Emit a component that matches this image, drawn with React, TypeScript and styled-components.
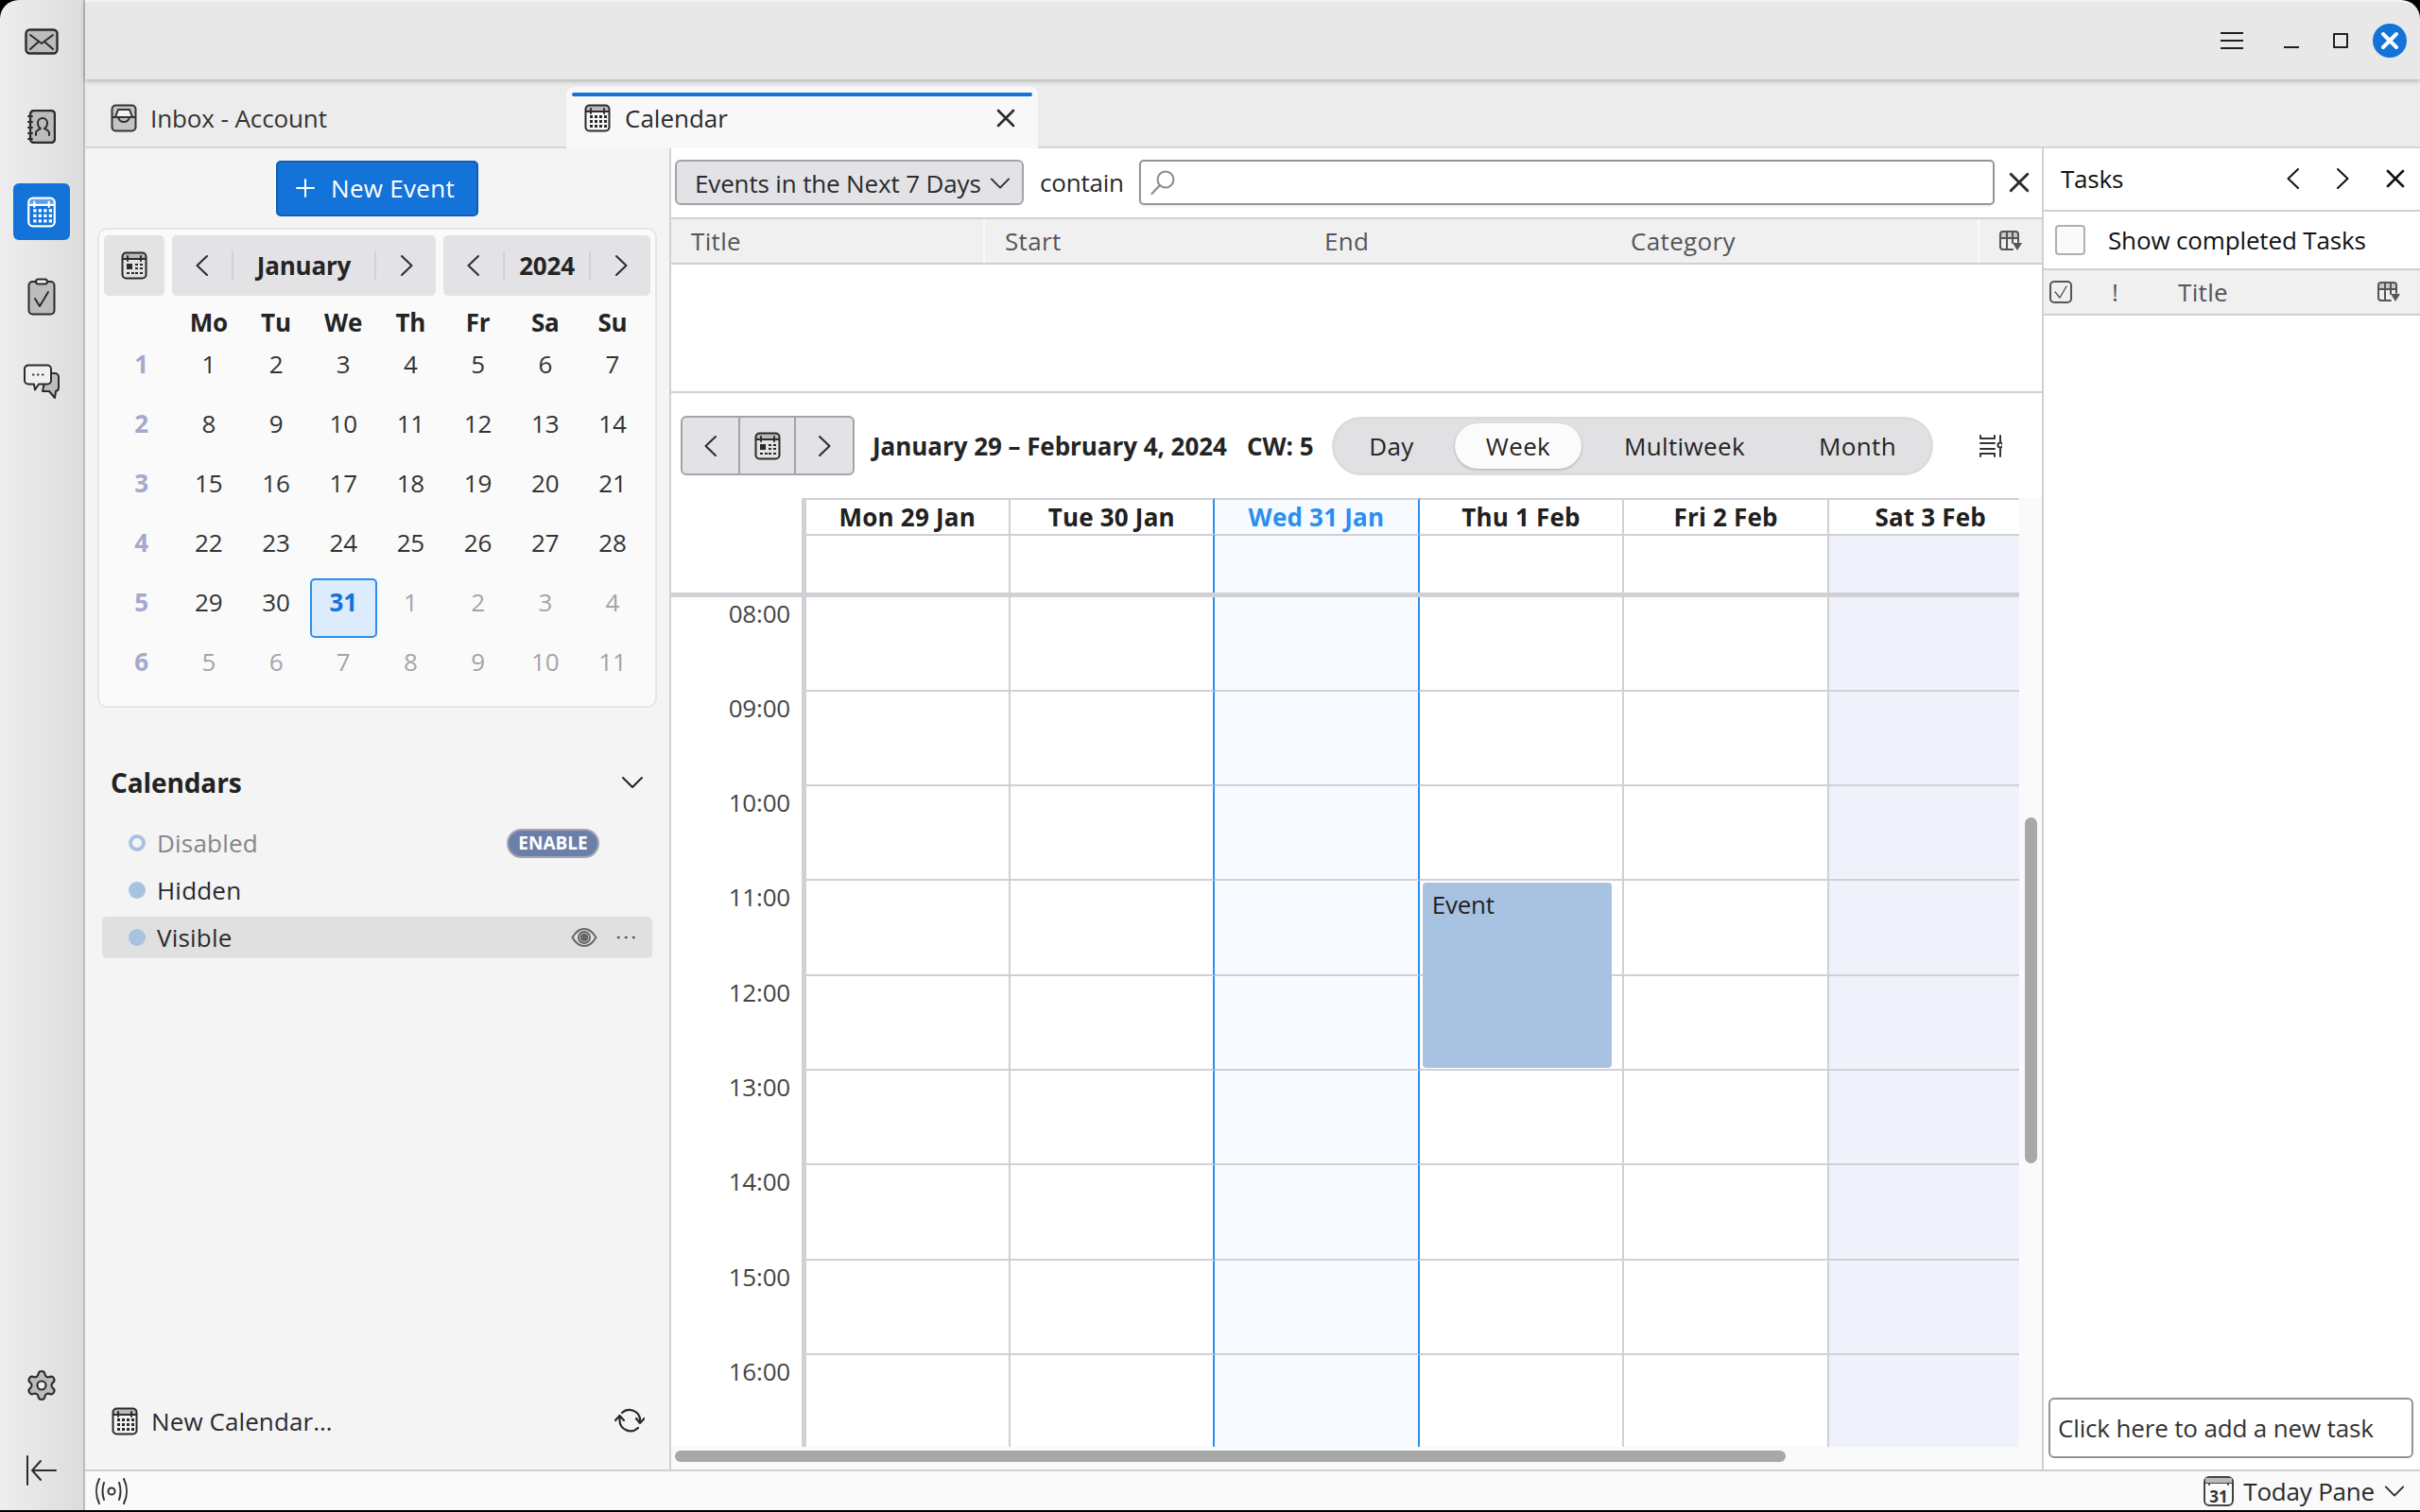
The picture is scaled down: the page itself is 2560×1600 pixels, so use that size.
import React from "react";
import styled, { createGlobalStyle } from "styled-components";

const GlobalStyles = createGlobalStyle`
  html, body {
    margin: 0;
    padding: 0;
    background: #000;
  }
  * {
    box-sizing: border-box;
  }
  body {
    font-family: "Open Sans", "Noto Sans", sans-serif;
    font-size: 26px;
    color: #2a2a2e;
    letter-spacing: -0.2px;
  }
`;

const Shell = styled.div`
  width: 2560px;
  height: 1600px;
  padding-bottom: 2px;
  background: #000;
  display: grid;
  grid-template-columns: 90px 1fr;
  overflow: hidden;
`;

const Rail = styled.nav`
  display: flex;
  flex-direction: column;
  align-items: center;
  gap: 30px;
  padding: 14px 0 12px;
  background: linear-gradient(to right, #eeeeee, #dcdcdc);
  border-right: 2px solid #bdbdbd;
  border-top-left-radius: 20px;
`;

const RailButton = styled.div<{ $active?: boolean }>`
  width: 60px;
  height: 60px;
  display: flex;
  align-items: center;
  justify-content: center;
  border-radius: 6px;
  color: #2b2b2b;
  background: ${(p) => (p.$active ? "#1373d9" : "transparent")};
`;

const RailSpacer = styled.div`
  flex: 1;
`;

const Content = styled.div`
  display: flex;
  flex-direction: column;
  min-width: 0;
  min-height: 0;
`;

const TitleBar = styled.header`
  height: 84px;
  flex: none;
  display: flex;
  align-items: center;
  justify-content: flex-end;
  padding-right: 6px;
  background: #e8e8e8;
  border-top: 2px solid #f2f2f2;
  border-top-right-radius: 20px;
  box-shadow: 0 2px 5px rgba(0, 0, 0, 0.25);
  position: relative;
  z-index: 3;
`;

const WinButton = styled.div<{ $gap?: number }>`
  width: 52px;
  height: 52px;
  display: flex;
  align-items: center;
  justify-content: center;
  margin-right: ${(p) => p.$gap ?? 0}px;
  color: #1f1f1f;
`;

const TabBar = styled.div`
  height: 73px;
  flex: none;
  display: flex;
  align-items: flex-end;
  background: #ececec;
  border-bottom: 2px solid #d6d6d8;
`;

const InboxTab = styled.div`
  width: 509px;
  height: 71px;
  display: flex;
  align-items: center;
  gap: 14px;
  padding: 11px 0 0 27px;
  letter-spacing: -0.1px;
  color: #333;
`;

const ActiveTab = styled.div`
  position: relative;
  width: 499px;
  height: 65px;
  margin-bottom: -2px;
  display: flex;
  align-items: center;
  gap: 15px;
  padding: 1px 20px 0 19px;
  letter-spacing: 0;
  background: #f8f8f8;
  border-radius: 8px 8px 0 0;
`;

const TabLine = styled.div`
  position: absolute;
  top: 6px;
  left: 6px;
  right: 6px;
  height: 4px;
  background: #1373d9;
  border-radius: 2px;
`;

const TabClose = styled.div`
  margin-left: auto;
  margin-right: 4px;
  display: flex;
`;

const Body = styled.div`
  flex: 1;
  min-height: 0;
  display: flex;
`;

const LeftPane = styled.aside`
  width: 620px;
  flex: none;
  display: flex;
  flex-direction: column;
  padding-top: 13px;
  background: #f4f4f4;
  border-right: 2px solid #d0d0d5;
`;

const NewEventButton = styled.button`
  align-self: center;
  width: 214px;
  height: 59px;
  display: flex;
  align-items: center;
  gap: 17px;
  padding: 0 0 2px 19px;
  font: inherit;
  letter-spacing: 0.3px;
  color: #fff;
  background: #1373d9;
  border: 2px solid #0e5cb5;
  border-radius: 5px;
`;

const MiniMonth = styled.section`
  width: 592px;
  height: 508px;
  margin: 12px 0 0 13px;
  padding: 6px 5px;
  background: #fafafa;
  border: 2px solid #e6e6e6;
  border-radius: 10px;
`;

const MiniHead = styled.div`
  display: flex;
  gap: 8px;
`;

const MiniToday = styled.div`
  width: 64px;
  height: 64px;
  display: flex;
  align-items: center;
  justify-content: center;
  background: #e3e3e6;
  border-radius: 5px;
`;

const Stepper = styled.div<{ $width: number; $side: number }>`
  width: ${(p) => p.$width}px;
  height: 64px;
  display: grid;
  grid-template-columns: ${(p) => p.$side}px 1fr ${(p) => p.$side}px;
  align-items: center;
  justify-items: center;
  background: #e3e3e6;
  border-radius: 5px;
`;

const StepperLabel = styled.div`
  justify-self: stretch;
  height: 30px;
  display: flex;
  align-items: center;
  justify-content: center;
  font-weight: 700;
  color: #242424;
  border-left: 2px solid #d2d2d6;
  border-right: 2px solid #d2d2d6;
`;

const DayGrid = styled.div`
  display: grid;
  grid-template-columns: repeat(8, 71.2px);
  grid-template-rows: 47px repeat(6, 63px);
  margin-left: 4px;
`;

const WeekDayName = styled.div`
  padding-top: 10px;
  text-align: center;
  line-height: 36px;
  font-weight: 700;
  color: #242424;
`;

const WeekNumber = styled.div`
  line-height: 50px;
  text-align: center;
  font-weight: 700;
  color: #a5a8cc;
`;

const DayCell = styled.div<{ $muted?: boolean; $selected?: boolean }>`
  line-height: ${(p) => (p.$selected ? "47px" : "50px")};
  text-align: center;
  font-weight: ${(p) => (p.$selected ? 700 : 400)};
  color: ${(p) => (p.$selected ? "#1373d9" : p.$muted ? "#a4a4a8" : "#333")};
  ${(p) =>
    p.$selected
      ? `background:#dcecfd;border:2px solid #2a8fef;border-radius:5px;`
      : ""}
`;

const SectionHead = styled.div`
  height: 44px;
  margin-top: 57px;
  display: flex;
  align-items: center;
  justify-content: space-between;
  padding: 0 27px 0 27px;
  font-size: 28px;
  font-weight: 700;
  letter-spacing: -0.1px;
  color: #222;
`;

const CalendarList = styled.div`
  display: flex;
  flex-direction: column;
  gap: 6px;
  width: 582px;
  margin: 20px 0 0 18px;
`;

const CalendarRow = styled.div<{ $hover?: boolean; $dim?: boolean }>`
  height: 44px;
  display: flex;
  align-items: center;
  padding: 0 18px 0 28px;
  border-radius: 5px;
  letter-spacing: 0.2px;
  background: ${(p) => (p.$hover ? "#e0e0e0" : "transparent")};
  color: ${(p) => (p.$dim ? "#85858a" : "#2a2a2e")};
`;

const CalendarDot = styled.span<{ $hollow?: boolean }>`
  width: 18px;
  height: 18px;
  flex: none;
  margin-right: 12px;
  border-radius: 50%;
  background: ${(p) => (p.$hollow ? "transparent" : "#a8c2e1")};
  border: ${(p) => (p.$hollow ? "4px solid #a8c2e1" : "none")};
`;

const EnablePill = styled.span`
  width: 98px;
  height: 31px;
  margin-left: auto;
  margin-right: 38px;
  display: flex;
  align-items: center;
  justify-content: center;
  font-size: 19px;
  font-weight: 700;
  letter-spacing: 0;
  color: #fff;
  background: #6b80a8;
  border: 2px solid #a2a5b2;
  border-radius: 16px;
`;

const RowActions = styled.div`
  margin-left: auto;
  display: flex;
  align-items: center;
  gap: 20px;
`;

const PaneFooter = styled.div`
  margin-top: auto;
  height: 50px;
  margin-bottom: 26px;
  display: flex;
  align-items: center;
  padding: 0 26px 0 28px;
  gap: 14px;
  letter-spacing: 0.1px;
`;

const SyncButton = styled.div`
  margin-left: auto;
  display: flex;
`;

const Main = styled.main`
  flex: 1;
  min-width: 0;
  display: flex;
  flex-direction: column;
  background: #fff;
`;

const FilterBar = styled.div`
  height: 75px;
  flex: none;
  display: flex;
  align-items: center;
  padding: 0 13px 2px 4px;
  border-bottom: 2px solid #d0d0d5;
`;

const FilterSelect = styled.div`
  width: 369px;
  height: 48px;
  flex: none;
  display: flex;
  align-items: center;
  justify-content: space-between;
  padding: 2px 12px 0 19px;
  letter-spacing: -0.15px;
  color: #2a2a2e;
  background: #e3e3e6;
  border: 2px solid #a3a3aa;
  border-radius: 6px;
`;

const FilterWord = styled.div`
  width: 88px;
  flex: none;
  margin: 0 17px 0 17px;
  text-align: center;
`;

const SearchBox = styled.div`
  flex: 1;
  height: 48px;
  display: flex;
  align-items: center;
  padding-left: 10px;
  background: #fff;
  border: 2px solid #949494;
  border-radius: 5px;
  box-shadow: 0 2px 3px rgba(0, 0, 0, 0.06);
`;

const FilterClose = styled.div`
  margin-left: 15px;
  display: flex;
`;

const TreeHead = styled.div`
  height: 48px;
  flex: none;
  display: grid;
  grid-template-columns: 332px 338px 324px 390px 66px;
  background: #f0f0f0;
  border-bottom: 2px solid #d0d0d5;
`;

const TreeCol = styled.div<{ $sep?: boolean; $icon?: boolean }>`
  display: flex;
  align-items: center;
  justify-content: ${(p) => (p.$icon ? "center" : "flex-start")};
  padding-left: ${(p) => (p.$icon ? "0" : "21px")};
  letter-spacing: 0.35px;
  color: #55555a;
  border-right: ${(p) => (p.$sep ? "2px solid #fafafa" : "none")};
`;

const EventList = styled.div`
  height: 136px;
  flex: none;
  border-bottom: 2px solid #d0d0d5;
`;

const ViewBar = styled.div`
  height: 111px;
  flex: none;
  display: flex;
  align-items: center;
  padding-left: 10px;
`;

const NavGroup = styled.div`
  width: 184px;
  height: 63px;
  flex: none;
  display: grid;
  grid-template-columns: 59px 61px 1fr;
  background: #e3e3e6;
  border: 2px solid #a3a3aa;
  border-radius: 6px;
`;

const NavCell = styled.div<{ $mid?: boolean }>`
  display: flex;
  align-items: center;
  justify-content: center;
  border-left: ${(p) => (p.$mid ? "2px solid #a3a3aa" : "none")};
  border-right: ${(p) => (p.$mid ? "2px solid #a3a3aa" : "none")};
`;

const RangeLabel = styled.div<{ $width: number; $left?: number }>`
  width: ${(p) => p.$width}px;
  margin-left: ${(p) => p.$left ?? 0}px;
  flex: none;
  font-weight: 700;
  letter-spacing: -0.05px;
  white-space: nowrap;
  color: #242424;
`;

const ViewTabs = styled.div`
  width: 636px;
  height: 62px;
  flex: none;
  display: flex;
  align-items: center;
  gap: 7px;
  background: #e1e1e4;
  border: 3px solid #dcdcde;
  border-radius: 31px;
`;

const ViewTab = styled.div<{ $width: number; $active?: boolean }>`
  width: ${(p) => p.$width}px;
  height: 48px;
  display: flex;
  align-items: center;
  justify-content: center;
  font-weight: 500;
  letter-spacing: 0.35px;
  color: #242424;
  border-radius: 24px;
  background: ${(p) => (p.$active ? "#fbfbfb" : "transparent")};
  box-shadow: ${(p) => (p.$active ? "0 1px 3px rgba(0,0,0,.25)" : "none")};
`;

const ToolButton = styled.div`
  margin-left: 49px;
  display: flex;
`;

const WeekView = styled.div`
  position: relative;
  flex: 1;
  min-height: 0;
  background: #fafafa;
  overflow: hidden;
`;

const WeekTable = styled.div`
  width: 1426px;
  height: 1004px;
  background: #fff;
  overflow: hidden;
`;

const WeekRow = styled.div<{ $height: number }>`
  height: ${(p) => p.$height}px;
  display: grid;
  grid-template-columns: 138px 5px 215.5px repeat(5, 216.6px);
`;

const Gutter = styled.div`
  padding-right: 12px;
  text-align: right;
  line-height: 35px;
  color: #444;
`;

const GutterEdge = styled.div`
  background: #d0d0d5;
`;

const WeekCell = styled.div<{ $bg: string; $line: string; $top?: boolean; $open?: boolean }>`
  position: relative;
  background: ${(p) => p.$bg};
  border-right: 2px solid ${(p) => p.$line};
  border-bottom: ${(p) => (p.$open ? "none" : "2px solid #d0d0d5")};
  border-top: ${(p) => (p.$top ? "2px solid #d0d0d5" : "none")};
`;

const DayTitle = styled(WeekCell)<{ $today?: boolean }>`
  display: flex;
  align-items: center;
  justify-content: center;
  padding-bottom: 2px;
  font-weight: 700;
  letter-spacing: 0.2px;
  color: ${(p) => (p.$today ? "#2a8fef" : "#202020")};
`;

const AllDayDivider = styled.div`
  height: 5px;
  background: #d0d0d5;
`;

const EventCard = styled.div`
  position: absolute;
  top: 2px;
  left: 3px;
  width: 200px;
  height: 196px;
  z-index: 2;
  padding: 5px 10px;
  line-height: 36px;
  color: #222;
  background: #a8c3e1;
  border-radius: 4px;
`;

const VScroll = styled.div`
  position: absolute;
  left: 1432px;
  top: 338px;
  width: 13px;
  height: 366px;
  background: #a8a8a8;
  border-radius: 7px;
`;

const HScroll = styled.div`
  position: absolute;
  left: 4px;
  top: 1008px;
  width: 1175px;
  height: 12px;
  background: #a8a8a8;
  border-radius: 6px;
`;

const TasksPane = styled.aside`
  width: 400px;
  flex: none;
  display: flex;
  flex-direction: column;
  background: #fff;
  border-left: 2px solid #d0d0d5;
`;

const TasksHead = styled.div`
  height: 67px;
  flex: none;
  display: flex;
  align-items: center;
  padding: 0 16px 2px 18px;
  color: #111;
  border-bottom: 2px solid #d0d0d5;
`;

const TasksTitle = styled.div`
  flex: 1;
`;

const TasksNav = styled.div<{ $gap: number }>`
  display: flex;
  margin-left: ${(p) => p.$gap}px;
`;

const TasksOption = styled.div`
  height: 62px;
  flex: none;
  display: flex;
  align-items: center;
  gap: 24px;
  padding-left: 12px;
  letter-spacing: -0.15px;
  color: #111;
  border-bottom: 2px solid #d0d0d5;
`;

const CheckBox = styled.span`
  width: 32px;
  height: 32px;
  background: #fafafa;
  border: 2px solid #b0b0b4;
  border-radius: 4px;
`;

const TasksColumns = styled.div`
  height: 48px;
  flex: none;
  display: flex;
  align-items: center;
  padding-left: 6px;
  letter-spacing: 0.35px;
  color: #55555a;
  background: #f0f0f0;
  border-bottom: 2px solid #d0d0d5;
`;

const TaskColMark = styled.span`
  margin-left: 42px;
  width: 70px;
`;

const TaskColTitle = styled.span`
  flex: 1;
`;

const TaskColPicker = styled.span`
  display: flex;
  margin-right: 21px;
`;

const TasksSpacer = styled.div`
  flex: 1;
`;

const AddTask = styled.div`
  height: 64px;
  flex: none;
  margin: 0 7px 12px 5px;
  display: flex;
  align-items: center;
  padding-left: 8px;
  letter-spacing: -0.15px;
  color: #333;
  background: #fff;
  border: 2px solid #949494;
  border-radius: 6px;
`;

const StatusBar = styled.footer`
  height: 43px;
  flex: none;
  display: flex;
  align-items: center;
  padding: 0 16px 0 11px;
  background: #fafafa;
  border-top: 2px solid #d0d0d5;
`;

const TodayPane = styled.div`
  margin-left: auto;
  display: flex;
  align-items: center;
  gap: 10px;
`;

const Glyph = styled.svg`
  display: block;
  flex: none;
  fill: none;
  stroke: currentColor;
  stroke-width: 2;
  stroke-linecap: round;
  stroke-linejoin: round;
`;

const Chevron = ({ dir, size = 24 }: { dir: "left" | "right" | "down"; size?: number }) => {
  const d = dir === "left" ? "M17 2 6.5 12 17 22" : dir === "right" ? "M7 2l10.5 10L7 22" : "M2 7l10 10L22 7";
  return (
    <Glyph width={size} height={size} viewBox="0 0 24 24">
      <path d={d} />
    </Glyph>
  );
};

const CloseX = ({ size = 20 }: { size?: number }) => (
  <Glyph width={size} height={size} viewBox="0 0 20 20">
    <path d="M2 2l16 16M18 2 2 18" style={{ strokeWidth: 2.6 }} />
  </Glyph>
);

const CalendarIcon = ({ w = 28, h = 30, color = "#2b2b2b", head = "#b9b9b9", mini = false }: { w?: number; h?: number; color?: string; head?: string; mini?: boolean }) => (
  <Glyph width={w} height={h} viewBox="0 0 28 30" style={{ color }}>
    <path d="M5 2h18a3 3 0 0 1 3 3v4H2V5a3 3 0 0 1 3-3z" style={{ fill: head, stroke: "none" }} />
    <rect x="1.5" y="1.5" width="25" height="27" rx="4" />
    <path d="M2 8h24M7 5v5M21 5v5" />
    {mini ? (
      <g style={{ fill: color, stroke: "none" }}>
        <rect x="6" y="13" width="6" height="6" />
        <rect x="15" y="13" width="3" height="2" />
        <rect x="20" y="13" width="3" height="2" />
        <rect x="15" y="17" width="3" height="2" />
        <rect x="20" y="17" width="3" height="2" />
        <rect x="6" y="22" width="3" height="2" />
        <rect x="11" y="22" width="3" height="2" />
        <rect x="15" y="22" width="3" height="2" />
        <rect x="20" y="22" width="3" height="2" />
      </g>
    ) : (
      <g style={{ fill: color, stroke: "none" }}>
        {[12, 17, 22].map((y) =>
          [6, 11, 16, 21].map((x) => <rect key={`${x}-${y}`} x={x} y={y} width="3" height="3" />)
        )}
      </g>
    )}
  </Glyph>
);

const MailIcon = () => (
  <Glyph width={36} height={28} viewBox="0 0 36 28">
    <rect x="1.5" y="1.5" width="33" height="25" rx="4" style={{ fill: "#bcbcbc", strokeWidth: 2.4 }} />
    <path d="M6 7l12 9L30 7M6 22l9-8M30 22l-9-8" />
  </Glyph>
);

const BookIcon = () => (
  <Glyph width={30} height={36} viewBox="0 0 30 36">
    <rect x="3" y="1" width="26" height="34" rx="4" style={{ fill: "#bcbcbc", strokeWidth: 2.4 }} />
    <path d="M1 7h4M1 13h4M1 19h4M1 25h4M1 31h4" />
    <path d="M9 27v-2c0-3 3-4 5-5-2-1-3-4-3-6a5 5 0 0 1 10 0c0 2-1 5-3 6 2 1 5 2 5 5v2" />
  </Glyph>
);

const TasksIcon = () => (
  <Glyph width={30} height={40} viewBox="0 0 30 40">
    <rect x="1.5" y="4" width="27" height="34.5" rx="4" style={{ fill: "#bcbcbc" }} />
    <rect x="9" y="1.5" width="12" height="5" rx="2.5" style={{ fill: "#f0f0f0" }} />
    <path d="M8 22l5 8 9-15" />
  </Glyph>
);

const ChatIcon = () => (
  <Glyph width={38} height={38} viewBox="0 0 38 38">
    <path d="M24 10h9a4 4 0 0 1 4 4v11a4 4 0 0 1-3 4l-1 7-6-7h-7z" style={{ fill: "#bcbcbc" }} />
    <path d="M5 1.5h20a4 4 0 0 1 4 4v12a4 4 0 0 1-4 4H16l-4 6-1-6H5a4 4 0 0 1-4-4v-12a4 4 0 0 1 4-4z" style={{ fill: "#f0f0f0" }} />
    <path d="M10 11.5h.5M15 11.5h.5M20 11.5h.5" />
  </Glyph>
);

const GearIcon = () => (
  <Glyph width={36} height={38} viewBox="0 0 24 24" style={{ strokeWidth: 1.4 }}>
    <path
      d="M9.671 4.136a2.34 2.34 0 0 1 4.659 0 2.34 2.34 0 0 0 3.319 1.915 2.34 2.34 0 0 1 2.33 4.033 2.34 2.34 0 0 0 0 3.831 2.34 2.34 0 0 1-2.33 4.033 2.34 2.34 0 0 0-3.319 1.915 2.34 2.34 0 0 1-4.659 0 2.34 2.34 0 0 0-3.32-1.915 2.34 2.34 0 0 1-2.33-4.033 2.34 2.34 0 0 0 0-3.831A2.34 2.34 0 0 1 6.35 6.051a2.34 2.34 0 0 0 3.319-1.915"
      style={{ fill: "#bcbcbc" }}
    />
    <circle cx="12" cy="12" r="3" style={{ fill: "#f0f0f0" }} />
  </Glyph>
);

const CollapseIcon = () => (
  <Glyph width={34} height={32} viewBox="0 0 34 32">
    <path d="M2 1v30M32 16H7M16 6 7 16l9 10" />
  </Glyph>
);

const PlusIcon = () => (
  <Glyph width={20} height={20} viewBox="0 0 20 20">
    <path d="M10 1v18M1 10h18" />
  </Glyph>
);

const InboxIcon = () => (
  <Glyph width={28} height={30} viewBox="0 0 28 30">
    <rect x="1.5" y="1.5" width="25" height="27" rx="4" style={{ fill: "#c4c4c4" }} />
    <path d="M8 6h12l3 8H5z" style={{ fill: "#f2f2f2" }} />
    <path d="M2 14h6c1 4 3 5 6 5s5-1 6-5h6" />
  </Glyph>
);

const EyeIcon = () => (
  <Glyph width={28} height={22} viewBox="0 0 28 22" style={{ color: "#666" }}>
    <path d="M1.5 11C5 5 9 2 14 2s9 3 12.5 9C23 17 19 20 14 20S5 17 1.5 11z" />
    <circle cx="14" cy="11" r="6" />
    <circle cx="14" cy="11" r="3.4" style={{ fill: "#666" }} />
  </Glyph>
);

const DotsIcon = () => (
  <Glyph width={20} height={6} viewBox="0 0 20 6" style={{ color: "#555" }}>
    <path d="M2 3h.5M10 3h.5M18 3h.5" style={{ strokeWidth: 2.6 }} />
  </Glyph>
);

const SyncIcon = () => (
  <Glyph width={32} height={32} viewBox="0 0 32 32" style={{ strokeWidth: 2.2 }}>
    <path d="M8 7A11.5 11.5 0 0 1 27 13v5M23 13l4 5 4.500-5" />
    <path d="M5.500 10v5A11.500 11.500 0 0 0 25 23M1 15l4.500-5 4.500 5" />
  </Glyph>
);

const SearchIcon = () => (
  <Glyph width={26} height={26} viewBox="0 0 26 26" style={{ color: "#8a8a8e" }}>
    <circle cx="16" cy="10" r="8.5" />
    <path d="M10 16 1.5 25" />
  </Glyph>
);

const PickerIcon = () => (
  <Glyph width={24} height={22} viewBox="0 0 24 22" style={{ color: "#555" }}>
    <path d="M14 20H4a3 3 0 0 1-3-3V4a3 3 0 0 1 3-3h13a3 3 0 0 1 3 3v8" />
    <path d="M1 8h19M8 1v19M14 1v12" />
    <path d="M1 2h19v6H1z" style={{ fill: "#555", stroke: "none", opacity: 0.25 }} />
    <path d="M14 13h10l-5 8z" style={{ fill: "#555", stroke: "none" }} />
  </Glyph>
);

const LayoutIcon = () => (
  <Glyph width={24} height={24} viewBox="0 0 24 24" style={{ color: "#333" }}>
    <path d="M1 1v3h15V1M1 9h15M1 15h15M1 23v-3h15v3M22 1v6M22 15v8" />
    <circle cx="22" cy="11" r="2.600" />
  </Glyph>
);

const RadioIcon = () => (
  <Glyph width={34} height={30} viewBox="0 0 34 30" style={{ color: "#333" }}>
    <circle cx="17" cy="15" r="3.6" />
    <path d="M9 6c-2 6-2 12 0 18M25 6c2 6 2 12 0 18M4 2C0 10 0 20 4 28M30 2c4 8 4 18 0 26" />
  </Glyph>
);

const TaskHeadCheck = () => (
  <Glyph width={24} height={24} viewBox="0 0 24 24" style={{ color: "#555" }}>
    <rect x="1" y="1" width="22" height="22" rx="4" />
    <path d="M6 12l5 6 7-12" style={{ strokeWidth: 1.4 }} />
  </Glyph>
);

const TodayIcon = () => (
  <Glyph width={32} height={32} viewBox="0 0 32 32" style={{ color: "#444" }}>
    <rect x="1" y="1" width="30" height="30" rx="5" />
    <path d="M1 7h30M6 5v4M26 5v4" />
    <path d="M2 2h28v5H2z" style={{ fill: "#bbb", stroke: "none" }} />
    <text x="16" y="28" textAnchor="middle" style={{ fontSize: 17, fontWeight: 700, fill: "#333", stroke: "none", fontFamily: "Open Sans", letterSpacing: 0 }}>
      31
    </text>
  </Glyph>
);

const MONTH_ROWS: number[][] = [
  [1, 2, 3, 4, 5, 6, 7],
  [8, 9, 10, 11, 12, 13, 14],
  [15, 16, 17, 18, 19, 20, 21],
  [22, 23, 24, 25, 26, 27, 28],
  [29, 30, 31, 1, 2, 3, 4],
  [5, 6, 7, 8, 9, 10, 11],
];

const WEEK_DAYS = ["Mo", "Tu", "We", "Th", "Fr", "Sa", "Su"];
const COLUMNS = ["Mon 29 Jan", "Tue 30 Jan", "Wed 31 Jan", "Thu 1 Feb", "Fri 2 Feb", "Sat 3 Feb"];
const HOURS = ["08:00", "09:00", "10:00", "11:00", "12:00", "13:00", "14:00", "15:00", "16:00"];
const HOUR_H = [100, 100, 100, 100.5, 100.5, 100, 100.5, 100, 100];

const cellBg = (i: number) => (i === 2 ? "#f7fbff" : i === 5 ? "#eff2fa" : "#fff");
const cellLine = (i: number) => (i === 1 || i === 2 ? "#2a8fef" : "#d0d0d5");

function App() {
  return (
    <Shell>
      <GlobalStyles />
      <Rail>
        <RailButton><MailIcon /></RailButton>
        <RailButton><BookIcon /></RailButton>
        <RailButton $active>
          <CalendarIcon w={32} h={33} color="#fff" head="#5c9fe8" />
        </RailButton>
        <RailButton><TasksIcon /></RailButton>
        <RailButton><ChatIcon /></RailButton>
        <RailSpacer />
        <RailButton><GearIcon /></RailButton>
        <RailButton><CollapseIcon /></RailButton>
      </Rail>

      <Content>
        <TitleBar>
          <WinButton $gap={11}>
            <Glyph width={24} height={18} viewBox="0 0 24 18"><path d="M0 1h24M0 9h24M0 17h24" style={{ strokeLinecap: "butt" }} /></Glyph>
          </WinButton>
          <WinButton>
            <Glyph width={16} height={12} viewBox="0 0 16 12" style={{ marginTop: 4 }}><path d="M0 11h16" style={{ strokeLinecap: "butt" }} /></Glyph>
          </WinButton>
          <WinButton>
            <Glyph width={16} height={16} viewBox="0 0 16 16"><rect x="1" y="1" width="14" height="14" /></Glyph>
          </WinButton>
          <WinButton>
            <Glyph width={36} height={36} viewBox="0 0 36 36" style={{ color: "#fff" }}>
              <circle cx="18" cy="18" r="18" style={{ fill: "#1373d9", stroke: "none" }} />
              <path d="M11 11l14 14M25 11 11 25" style={{ strokeWidth: 4 }} />
            </Glyph>
          </WinButton>
        </TitleBar>

        <TabBar>
          <InboxTab>
            <InboxIcon />
            Inbox - Account
          </InboxTab>
          <ActiveTab>
            <TabLine />
            <CalendarIcon w={28} h={30} />
            Calendar
            <TabClose><CloseX size={20} /></TabClose>
          </ActiveTab>
        </TabBar>

        <Body>
          <LeftPane>
            <NewEventButton>
              <PlusIcon />
              New Event
            </NewEventButton>

            <MiniMonth>
              <MiniHead>
                <MiniToday><CalendarIcon mini w={28} h={30} /></MiniToday>
                <Stepper $width={279} $side={63}>
                  <Chevron dir="left" />
                  <StepperLabel>January</StepperLabel>
                  <Chevron dir="right" />
                </Stepper>
                <Stepper $width={219} $side={63}>
                  <Chevron dir="left" />
                  <StepperLabel>2024</StepperLabel>
                  <Chevron dir="right" />
                </Stepper>
              </MiniHead>
              <DayGrid>
                <WeekDayName />
                {WEEK_DAYS.map((d) => (
                  <WeekDayName key={d}>{d}</WeekDayName>
                ))}
                {MONTH_ROWS.map((row, r) => (
                  <React.Fragment key={r}>
                    <WeekNumber>{r + 1}</WeekNumber>
                    {row.map((day, i) => (
                      <DayCell
                        key={i}
                        $selected={r === 4 && day === 31}
                        $muted={r === 5 || (r === 4 && day < 20)}
                      >
                        {day}
                      </DayCell>
                    ))}
                  </React.Fragment>
                ))}
              </DayGrid>
            </MiniMonth>

            <SectionHead>
              Calendars
              <Chevron dir="down" />
            </SectionHead>
            <CalendarList>
              <CalendarRow $dim>
                <CalendarDot $hollow />
                Disabled
                <EnablePill>ENABLE</EnablePill>
              </CalendarRow>
              <CalendarRow>
                <CalendarDot />
                Hidden
              </CalendarRow>
              <CalendarRow $hover>
                <CalendarDot />
                Visible
                <RowActions>
                  <EyeIcon />
                  <DotsIcon />
                </RowActions>
              </CalendarRow>
            </CalendarList>

            <PaneFooter>
              <CalendarIcon w={28} h={30} />
              New Calendar…
              <SyncButton><SyncIcon /></SyncButton>
            </PaneFooter>
          </LeftPane>

          <Main>
            <FilterBar>
              <FilterSelect>
                Events in the Next 7 Days
                <Chevron dir="down" size={22} />
              </FilterSelect>
              <FilterWord>contain</FilterWord>
              <SearchBox><SearchIcon /></SearchBox>
              <FilterClose><CloseX size={22} /></FilterClose>
            </FilterBar>
            <TreeHead>
              <TreeCol $sep>Title</TreeCol>
              <TreeCol>Start</TreeCol>
              <TreeCol>End</TreeCol>
              <TreeCol $sep>Category</TreeCol>
              <TreeCol $icon><PickerIcon /></TreeCol>
            </TreeHead>
            <EventList />

            <ViewBar>
              <NavGroup>
                <NavCell><Chevron dir="left" /></NavCell>
                <NavCell $mid><CalendarIcon mini w={28} h={30} /></NavCell>
                <NavCell><Chevron dir="right" /></NavCell>
              </NavGroup>
              <RangeLabel $width={396} $left={19}>January 29 – February 4, 2024</RangeLabel>
              <RangeLabel $width={90}>CW: 5</RangeLabel>
              <ViewTabs>
                <ViewTab $width={120}>Day</ViewTab>
                <ViewTab $width={134} $active>Week</ViewTab>
                <ViewTab $width={204}>Multiweek</ViewTab>
                <ViewTab $width={148}>Month</ViewTab>
              </ViewTabs>
              <ToolButton><LayoutIcon /></ToolButton>
            </ViewBar>

            <WeekView>
              <WeekTable>
                <WeekRow $height={38}>
                  <div />
                  <GutterEdge />
                  {COLUMNS.map((c, i) => (
                    <DayTitle key={c} $top $open $today={i === 2} $bg={i === 2 ? "#f7fbff" : "#fff"} $line={cellLine(i)}>
                      {c}
                    </DayTitle>
                  ))}
                </WeekRow>
                <WeekRow $height={62}>
                  <div />
                  <GutterEdge />
                  {COLUMNS.map((c, i) => (
                    <WeekCell key={c} $top $open $bg={cellBg(i)} $line={cellLine(i)} />
                  ))}
                </WeekRow>
                <AllDayDivider />
                {HOURS.map((h, r) => (
                  <WeekRow key={h} $height={HOUR_H[r]}>
                    <Gutter>{h}</Gutter>
                    <GutterEdge />
                    {COLUMNS.map((c, i) => (
                      <WeekCell key={c} $bg={cellBg(i)} $line={cellLine(i)}>
                        {h === "11:00" && i === 3 && <EventCard>Event</EventCard>}
                      </WeekCell>
                    ))}
                  </WeekRow>
                ))}
              </WeekTable>
              <VScroll />
              <HScroll />
            </WeekView>
          </Main>

          <TasksPane>
            <TasksHead>
              <TasksTitle>Tasks</TasksTitle>
              <TasksNav $gap={0}><Chevron dir="left" /></TasksNav>
              <TasksNav $gap={28}><Chevron dir="right" /></TasksNav>
              <TasksNav $gap={34}><CloseX size={20} /></TasksNav>
            </TasksHead>
            <TasksOption>
              <CheckBox />
              Show completed Tasks
            </TasksOption>
            <TasksColumns>
              <TaskHeadCheck />
              <TaskColMark>!</TaskColMark>
              <TaskColTitle>Title</TaskColTitle>
              <TaskColPicker><PickerIcon /></TaskColPicker>
            </TasksColumns>
            <TasksSpacer />
            <AddTask>Click here to add a new task</AddTask>
          </TasksPane>
        </Body>

        <StatusBar>
          <RadioIcon />
          <TodayPane>
            <TodayIcon />
            Today Pane
            <Chevron dir="down" size={22} />
          </TodayPane>
        </StatusBar>
      </Content>
    </Shell>
  );
}

export default App;
